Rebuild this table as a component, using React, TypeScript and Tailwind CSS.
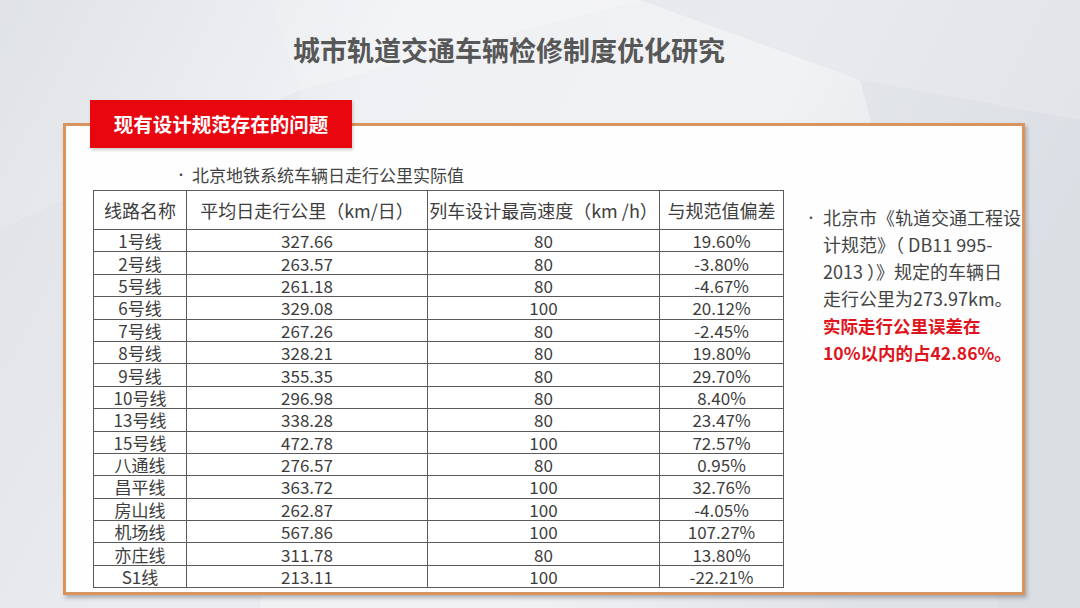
const rows: [string, string, string, string][] = [
  ["1号线", "327.66", "80", "19.60%"],
  ["2号线", "263.57", "80", "-3.80%"],
  ["5号线", "261.18", "80", "-4.67%"],
  ["6号线", "329.08", "100", "20.12%"],
  ["7号线", "267.26", "80", "-2.45%"],
  ["8号线", "328.21", "80", "19.80%"],
  ["9号线", "355.35", "80", "29.70%"],
  ["10号线", "296.98", "80", "8.40%"],
  ["13号线", "338.28", "80", "23.47%"],
  ["15号线", "472.78", "100", "72.57%"],
  ["八通线", "276.57", "80", "0.95%"],
  ["昌平线", "363.72", "100", "32.76%"],
  ["房山线", "262.87", "100", "-4.05%"],
  ["机场线", "567.86", "100", "107.27%"],
  ["亦庄线", "311.78", "80", "13.80%"],
  ["S1线", "213.11", "100", "-22.21%"],
];

const cell = "border border-[#5a5a5a] text-center p-0 leading-none";

function Backdrop() {
  return (
    <svg className="absolute inset-0" width="1080" height="608" viewBox="0 0 1080 608">
      <defs>
        <linearGradient id="bg" x1="0" y1="0" x2="1" y2="0.3">
          <stop offset="0" stopColor="#d9dce1" />
          <stop offset="0.35" stopColor="#eef0f3" />
          <stop offset="0.7" stopColor="#f1f2f4" />
          <stop offset="1" stopColor="#dfe2e7" />
        </linearGradient>
      </defs>
      <rect width="1080" height="608" fill="url(#bg)" />
      <polygon points="0,0 270,0 300,90 0,230" fill="#ffffff" opacity="0.18" />
      <polygon points="270,0 640,0 300,90" fill="#ffffff" opacity="0.25" />
      <polygon points="640,0 1080,0 1080,120 860,80" fill="#e2e5ea" opacity="0.6" />
      <polygon points="860,80 1080,120 1080,608 1000,608" fill="#d7dbe1" opacity="0.5" />
      <polygon points="0,230 300,90 260,608 0,608" fill="#e4e6ea" opacity="0.5" />
    </svg>
  );
}

export default function App() {
  return (
    <div
      className="relative w-[1080px] h-[608px] overflow-hidden text-[#404040]"
      style={{ fontFamily: '"Noto Sans CJK SC", "Noto Sans", sans-serif' }}
    >
      <Backdrop />
      <div className="relative">
        <h1 className="pl-[293px] pt-[30px] h-[70px] leading-[40px] text-[27px] font-bold text-[#575757] whitespace-nowrap">
          城市轨道交通车辆检修制度优化研究
        </h1>

        <div className="relative ml-[63px] mt-[53px] w-[962px] h-[472px] border-[3px] border-[#d8935e] bg-[#fefefe] shadow-[2px_3px_4px_rgba(0,0,0,0.25)]">
          <div className="absolute left-[24px] top-[-26px] w-[262px] h-[48px] bg-[#e8060f] flex items-center justify-center shadow-[1px_2px_3px_rgba(0,0,0,0.2)]">
            <span className="text-white font-bold text-[19.5px] leading-none">现有设计规范存在的问题</span>
          </div>

          <div className="flex pl-[27px] pt-[37px]">
            <div className="flex flex-col">
              <div className="flex items-center h-[24px] pl-[82px] text-[17px] text-[#444]">
                <span className="w-[17px] text-[12px]">•</span>
                <span>北京地铁系统车辆日走行公里实际值</span>
              </div>
              <table className="mt-[3px] w-[690px] table-fixed border-collapse bg-white text-[17px] text-[#3d3d3d]">
                <colgroup>
                  <col className="w-[93px]" />
                  <col className="w-[241px]" />
                  <col className="w-[232px]" />
                  <col className="w-[124px]" />
                </colgroup>
                <thead>
                  <tr className="h-[39px]">
                    <th className={`${cell} font-normal text-[18px]`}>线路名称</th>
                    <th className={`${cell} font-normal text-[18px]`}>平均日走行公里（km/日）</th>
                    <th className={`${cell} font-normal text-[18px] whitespace-nowrap`}>列车设计最高速度（km /h）</th>
                    <th className={`${cell} font-normal text-[18px]`}>与规范值偏差</th>
                  </tr>
                </thead>
                <tbody>
                  {rows.map((r) => (
                    <tr key={r[0]} className="h-[22.4px]">
                      {r.map((v, i) => (
                        <td key={i} className={cell}>
                          {v}
                        </td>
                      ))}
                    </tr>
                  ))}
                </tbody>
              </table>
            </div>

            <div className="flex pl-[21px] pt-[41px] text-[18px] leading-[27px] whitespace-nowrap">
              <span className="w-[18px] shrink-0 text-[12px] text-[#555]">•</span>
              <div className="flex flex-col text-[#444]">
                <span>北京市《轨道交通工程设</span>
                <span>计规范》（ DB11 995-</span>
                <span>2013 ）》规定的车辆日</span>
                <span>走行公里为273.97km。</span>
                <span className="font-bold text-[#e0141c] text-[17.5px]">实际走行公里误差在</span>
                <span className="font-bold text-[#e0141c] text-[17.5px]">10%以内的占42.86%。</span>
              </div>
            </div>
          </div>
        </div>
      </div>
    </div>
  );
}
